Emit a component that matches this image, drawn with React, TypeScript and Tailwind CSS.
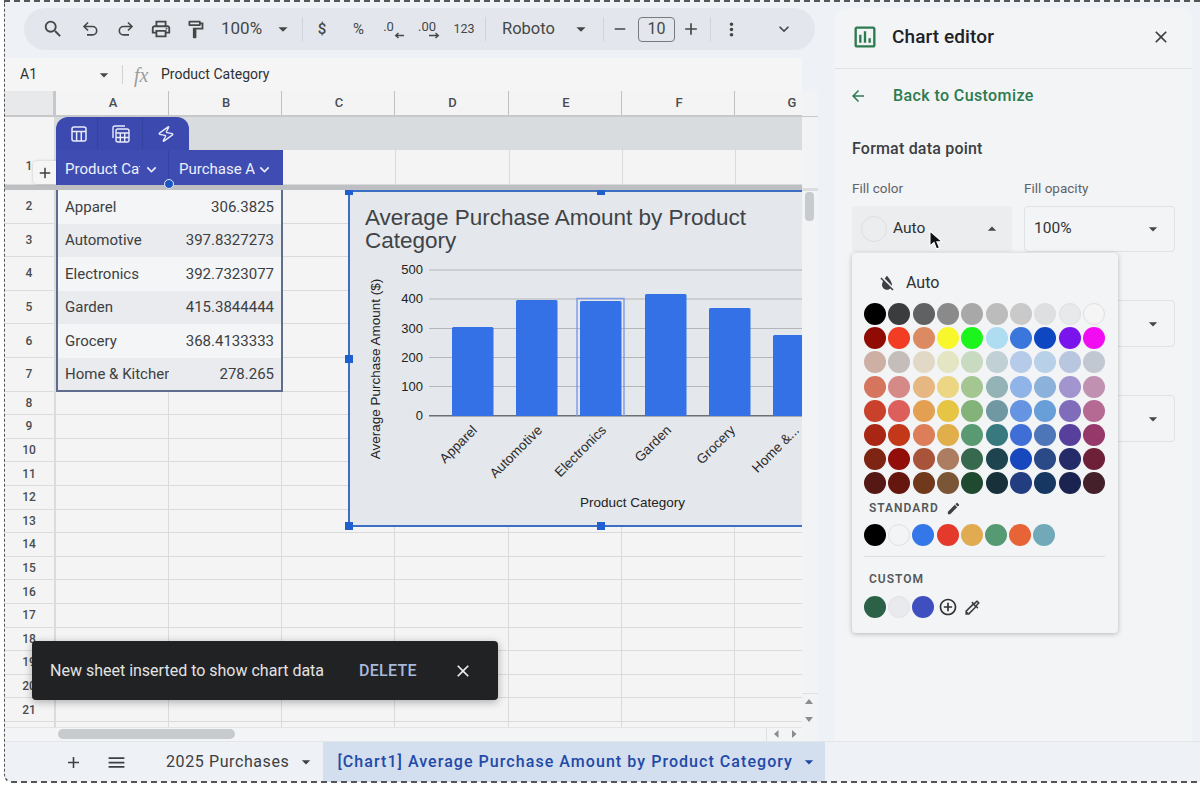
import { Zap } from "lucide-react";
import {
  MdAdd,
  MdAddCircleOutline,
  MdArrowBack,
  MdArrowDropDown,
  MdArrowDropUp,
  MdClose,
  MdEdit,
  MdExpandMore,
  MdFormatColorReset,
  MdMenu,
  MdMoreVert,
  MdOutlineColorize,
  MdOutlineFormatPaint,
  MdOutlineInsertChart,
  MdOutlinePrint,
  MdRemove,
  MdSearch,
} from "react-icons/md";

const palette = [
  "bg-[#000000]", "bg-[#3b3c3e]", "bg-[#606162]", "bg-[#8a8a8a]", "bg-[#a8a8a8]", "bg-[#bcbcbc]", "bg-[#c9c9c9]", "bg-[#dedfe0]", "bg-[#e8e9ea] border border-[#dfe0e2]", "bg-[#f5f5f6] border border-[#dfe0e2]",
  "bg-[#8f0b04]", "bg-[#f23c24]", "bg-[#dc8a62]", "bg-[#f7f72c]", "bg-[#1cf51c]", "bg-[#aeddf2]", "bg-[#3b76dc]", "bg-[#0f46c2]", "bg-[#7a14ec]", "bg-[#f20cf2]",
  "bg-[#cdafa4]", "bg-[#c4bdb9]", "bg-[#e2d8c6]", "bg-[#e3e5c3]", "bg-[#c8dac0]", "bg-[#c0d0d4]", "bg-[#b6cbea]", "bg-[#b8d0e8]", "bg-[#b8c6e0]", "bg-[#c2c8d2]",
  "bg-[#d6755e]", "bg-[#d68a88]", "bg-[#e6b780]", "bg-[#ecd683]", "bg-[#a4c690]", "bg-[#93b3b6]", "bg-[#91b4e8]", "bg-[#8cb2dc]", "bg-[#a194cf]", "bg-[#c091b0]",
  "bg-[#c9412a]", "bg-[#dd5f5c]", "bg-[#e3a052]", "bg-[#e6c544]", "bg-[#84b37a]", "bg-[#6f98a2]", "bg-[#6494e2]", "bg-[#699fd8]", "bg-[#7f6dbb]", "bg-[#b56a94]",
  "bg-[#a92614]", "bg-[#c4381a]", "bg-[#dc7e58]", "bg-[#e1ae4c]", "bg-[#5a9a72]", "bg-[#37797e]", "bg-[#3f6fd6]", "bg-[#4d76b9]", "bg-[#57409c]", "bg-[#96386a]",
  "bg-[#7d2413]", "bg-[#910e0a]", "bg-[#a9543a]", "bg-[#ad7d62]", "bg-[#37694f]", "bg-[#1e4450]", "bg-[#1848bd]", "bg-[#294a86]", "bg-[#252a68]", "bg-[#6e2039]",
  "bg-[#561814]", "bg-[#65170f]", "bg-[#70391c]", "bg-[#7a5636]", "bg-[#204a30]", "bg-[#18303a]", "bg-[#233e80]", "bg-[#173763]", "bg-[#1b2350]", "bg-[#43202a]",
];

const standard = [
  "bg-[#000000]",
  "bg-[#f3f4f5] border border-[#dfe0e2]",
  "bg-[#3477e8]",
  "bg-[#e33a2c]",
  "bg-[#e1ab52]",
  "bg-[#559a72]",
  "bg-[#e76436]",
  "bg-[#71a9b8]",
];

const custom = ["bg-[#2b6147]", "bg-[#e8eaed] border border-[#e0e2e5]", "bg-[#3f4fc0]"];

const tableRows = [
  ["Apparel", "306.3825"],
  ["Automotive", "397.8327273"],
  ["Electronics", "392.7323077"],
  ["Garden", "415.3844444"],
  ["Grocery", "368.4133333"],
  ["Home & Kitchen", "278.265"],
];

const emptyRows = [8, 9, 10, 11, 12, 13, 14, 15, 16, 17, 18, 19, 20, 21];

const bars = [
  { name: "Apparel", x: 452, top: 327, labelX: 478 },
  { name: "Automotive", x: 516, top: 300, labelX: 543 },
  { name: "Electronics", x: 580, top: 301, labelX: 607 },
  { name: "Garden", x: 645, top: 294, labelX: 672 },
  { name: "Grocery", x: 709, top: 308, labelX: 736 },
  { name: "Home &...", x: 773, top: 335, labelX: 800 },
];

const ticks = [
  { label: "500", y: 270 },
  { label: "400", y: 299 },
  { label: "300", y: 328.5 },
  { label: "200", y: 357.5 },
  { label: "100", y: 386.5 },
];

function Sep({ className }: { className: string }) {
  return <div className={`h-[24px] w-px bg-[#d0d4d9] ${className}`} />;
}

function Slot({ className, children }: { className: string; children: React.ReactNode }) {
  return <div className={`flex h-full items-center justify-center ${className}`}>{children}</div>;
}

function UndoIcon({ className = "" }: { className?: string }) {
  return (
    <svg width="18" height="18" viewBox="0 0 18 18" fill="none" stroke="currentColor" strokeWidth="1.6" className={className}>
      <path d="M7 2.5L3 6.5l4 4M3 6.5h8.5a4.2 4.2 0 0 1 0 8.4H6" />
    </svg>
  );
}

function DecimalIcon({ label, flip }: { label: string; flip?: boolean }) {
  return (
    <div className="flex flex-col items-center text-[13px] leading-[12px] text-[#444746]">
      <span className={flip ? "mt-[2px] -ml-[4px]" : "mt-[2px] -ml-[10px]"}>{label}</span>
      <svg width="26" height="7" viewBox="0 0 26 7" className="-mt-[1px]">
        {flip ? (
          <path d="M13 3.5h9M19.5 1l2.8 2.5L19.5 6" fill="none" stroke="#444746" strokeWidth="1.4" />
        ) : (
          <path d="M23 3.5h-8M17.5 1l-2.8 2.5L17.5 6" fill="none" stroke="#444746" strokeWidth="1.4" />
        )}
      </svg>
    </div>
  );
}

function Toolbar() {
  return (
    <div className="ml-[20px] mt-[8px] flex h-[42px] w-[791px] items-center rounded-[21px] bg-[#e3e7ed] pl-[11px] text-[#444746]">
      <Slot className="w-[36px]"><MdSearch size={22} /></Slot>
      <Slot className="w-[37px]"><UndoIcon /></Slot>
      <Slot className="w-[35px]"><UndoIcon className="-scale-x-100" /></Slot>
      <Slot className="w-[35px]"><MdOutlinePrint size={22} /></Slot>
      <Slot className="w-[35px]"><MdOutlineFormatPaint size={21} /></Slot>
      <span className="ml-[8px] w-[50px] text-[17px]">100%</span>
      <Slot className="w-[24px]"><MdArrowDropDown size={22} /></Slot>
      <Sep className="ml-[7px]" />
      <Slot className="w-[38px] text-[15px] font-medium">$</Slot>
      <Slot className="w-[35px] text-[15px]">%</Slot>
      <Slot className="w-[35px]"><DecimalIcon label=".0" /></Slot>
      <Slot className="w-[36px]"><DecimalIcon label=".00" flip /></Slot>
      <Slot className="w-[34px] text-[12.5px]">123</Slot>
      <Sep className="ml-[4px]" />
      <span className="ml-[16px] w-[64px] text-[16.5px]">Roboto</span>
      <Slot className="w-[30px]"><MdArrowDropDown size={22} /></Slot>
      <Sep className="ml-[7px]" />
      <Slot className="w-[32px]"><MdRemove size={18} /></Slot>
      <div className="ml-[2px] flex h-[25px] w-[37px] items-center justify-center rounded-[4px] border border-[#777b80] text-[16px]">10</div>
      <Slot className="w-[32px]"><MdAdd size={20} /></Slot>
      <Sep className="ml-[3px]" />
      <Slot className="w-[40px]"><MdMoreVert size={21} /></Slot>
      <Slot className="ml-[16px] w-[34px]"><MdExpandMore size={20} /></Slot>
    </div>
  );
}

function FormulaBar() {
  return (
    <div className="mt-[8px] flex h-[33px] w-[798px] items-center bg-[#f5f5f6] text-[14px] text-[#2f3133]">
      <span className="ml-[16px] w-[74px]">A1</span>
      <MdArrowDropDown size={20} className="text-[#444746]" />
      <div className="ml-[8px] h-[19px] w-px bg-[#d0d2d5]" />
      <span className="ml-[11px] w-[28px] font-['Liberation_Serif',serif] text-[20px] italic text-[#9a9da0]">fx</span>
      <span className="-ml-[1px]">Product Category</span>
    </div>
  );
}

function RowLabel({ children, className = "" }: { children?: React.ReactNode; className?: string }) {
  return (
    <div className={`flex h-full w-[52px] shrink-0 items-center justify-center border-b border-r-2 border-[#dadbdc] bg-[#f4f4f5] text-[12px] font-medium text-[#4a4c4f] ${className}`}>
      {children}
    </div>
  );
}

const colWidths = ["w-[113px]", "w-[113px]", "w-[113px]", "w-[114px]", "w-[113px]", "w-[113px]", "w-[113px]"];

function EmptyCells({ from = 0 }: { from?: number }) {
  return (
    <>
      {colWidths.slice(from).map((w, i) => (
        <div key={i} className={`h-full shrink-0 border-b border-r border-[#d9dadb] ${w}`} />
      ))}
    </>
  );
}

function Sheet() {
  return (
    <div className="relative h-[650px] w-[798px] overflow-hidden bg-[#f4f4f5]">
      {/* column letters */}
      <div className="flex h-[26px] border-b-2 border-[#c6c8ca]">
        <div className="h-full w-[52px] shrink-0 border-r-[3px] border-[#c6c8ca] bg-[#e8e9eb]" />
        {"ABCDEFG".split("").map((c, i) => (
          <div key={c} className={`flex h-full shrink-0 items-center justify-center border-r border-[#bfc1c3] pl-[2px] text-[13px] font-medium text-[#4a4c4f] ${colWidths[i]}`}>
            {c}
          </div>
        ))}
      </div>

      {/* table toolbar band */}
      <div className="flex h-[33px]">
        <RowLabel className="border-b-0" />
        <div className="h-full flex-1 bg-[#d9dcde]">
          <div className="flex h-full w-[133px] items-center rounded-t-[12px] bg-[#3c4ab0] text-[#e8ebfa]">
            <div className="flex h-full w-[42px] items-center justify-center border-r border-[#3443a0] pl-[5px]">
              <svg width="18" height="18" viewBox="0 0 18 18" fill="none" stroke="currentColor" strokeWidth="1.5">
                <rect x="2" y="2" width="14" height="14" rx="2" />
                <path d="M2 6.5h14M6.6 6.5V16M11.3 6.5V16" />
              </svg>
            </div>
            <div className="flex h-full w-[45px] items-center justify-center border-r border-[#3443a0] pl-[1px]">
              <svg width="20" height="20" viewBox="0 0 20 20" fill="none" stroke="currentColor" strokeWidth="1.4">
                <path d="M2 14V4a2 2 0 0 1 2-2h10" />
                <rect x="5" y="5" width="13" height="13" rx="2" />
                <path d="M5 9h13M5 13.5h13M9.3 9v9M13.7 9v9" />
              </svg>
            </div>
            <div className="flex h-full w-[46px] items-center justify-center">
              <Zap size={18} strokeWidth={1.8} className="rotate-[10deg]" />
            </div>
          </div>
        </div>
      </div>

      {/* row 1 */}
      <div className="flex h-[35px]">
        <RowLabel className="items-start pt-[7px]">1</RowLabel>
        <div className="flex h-full w-[113px] shrink-0 items-center justify-between border-r border-[#3443a0] bg-[#3f4db3] pl-[9px] pr-[7px] pt-[3px] text-[15px] text-[#eef0fb]">
          <span className="w-[75px] overflow-hidden whitespace-nowrap">Product Category</span>
          <MdExpandMore size={19} />
        </div>
        <div className="flex h-full w-[114px] shrink-0 items-center justify-between bg-[#3f4db3] pl-[10px] pr-[9px] pt-[3px] text-[15px] text-[#eef0fb]">
          <span className="w-[76px] overflow-hidden whitespace-nowrap">Purchase Amount</span>
          <MdExpandMore size={19} />
        </div>
        <EmptyCells from={2} />
      </div>

      {/* frozen divider */}
      <div className="h-[5px] bg-[#bdbfc2]" />

      {/* table rows */}
      {tableRows.map(([name, value], i) => (
        <div key={name} className="flex h-[33.6px]">
          <RowLabel>{i + 2}</RowLabel>
          <div className={`relative -mr-[1px] flex h-full w-[227px] shrink-0 items-center border-x-2 border-[#5f6c8c] text-[15px] text-[#3c4043] ${i === 5 ? "border-b-2" : ""} ${i % 2 === 1 ? "bg-[#e9ebee]" : "bg-[#f4f5f6]"}`}>
            <span className="w-[111px] shrink-0 overflow-hidden whitespace-nowrap pl-[7px]">{name}</span>
            <span className="flex-1 pr-[7px] text-right">{value}</span>
          </div>
          <EmptyCells from={2} />
        </div>
      ))}

      {emptyRows.map((n) => (
        <div key={n} className="flex h-[23.6px]">
          <RowLabel>{n}</RowLabel>
          <EmptyCells />
        </div>
      ))}

      {/* stub of row 22 */}
      <div className="flex h-[5px]">
        <div className="h-full w-[52px] shrink-0 border-r-2 border-[#dadbdc]" />
        {colWidths.map((w, i) => (
          <div key={i} className={`h-full shrink-0 border-r border-[#d9dadb] ${w}`} />
        ))}
      </div>

      {/* horizontal scrollbar */}
      <div className="flex h-[14px] items-center border-t border-[#e3e4e6] bg-[#f3f4f6] pl-[54px]">
        <div className="h-[10px] w-[177px] rounded-[5px] bg-[#c8cbce]" />
        <span className="ml-[531px] flex h-full w-[20px] items-center justify-center border-l border-[#dfe0e2]">
          <svg width="5" height="8" viewBox="0 0 5 8"><path d="M4.5 0v8L0 4z" fill="#8a8d90" /></svg>
        </span>
        <span className="flex h-full w-[16px] items-center justify-center">
          <svg width="5" height="8" viewBox="0 0 5 8"><path d="M0 0v8l4.5-4z" fill="#8a8d90" /></svg>
        </span>
      </div>

      <Chart />

      {/* add column button and resize dot */}
      <div className="absolute left-[29px] top-[70px] flex h-[23px] w-[23px] items-center justify-center rounded-l-[4px] bg-[#f5f5f6] shadow-[0_0_3px_rgba(0,0,0,0.2)]">
        <MdAdd size={18} className="text-[#3c4043]" />
      </div>
      <div className="absolute left-[160px] top-[88px] h-[10px] w-[10px] rounded-full border border-[#e6e8f5] bg-[#1a56c4]" />

      {/* toast */}
      <div className="absolute left-[28px] top-[550px] flex h-[59px] w-[466px] items-center rounded-[4px] bg-[#212223] pl-[18px] text-[16px] text-[#e3e3e3] shadow-[0_2px_8px_rgba(0,0,0,0.3)]">
        <span className="w-[309px] whitespace-nowrap">New sheet inserted to show chart data</span>
        <span className="w-[94px] font-medium tracking-[0.3px] text-[#a8b9dd]">DELETE</span>
        <MdClose size={20} className="text-[#ededed]" />
      </div>
    </div>
  );
}

function Chart() {
  return (
    <div className="absolute left-[344px] top-[99px] h-[337px] w-[454px] border-y-2 border-l-2 border-[#3a6fc4] bg-[#e4e7eb]">
      <svg viewBox="350 192 452 333" className="h-[333px] w-[452px] font-['Liberation_Sans',sans-serif]">
        <text x="365" y="225" fontSize="22.5" fill="#3f4347">Average Purchase Amount by Product</text>
        <text x="365" y="248" fontSize="22.5" fill="#3f4347">Category</text>

        {ticks.map((t) => (
          <g key={t.label}>
            <line x1="429" x2="802" y1={t.y} y2={t.y} stroke="#b4b6ba" strokeWidth="1.2" />
            <text x="423" y={t.y + 4} fontSize="13" textAnchor="end" fill="#222">{t.label}</text>
          </g>
        ))}
        <line x1="429" x2="802" y1="415.7" y2="415.7" stroke="#6d6f72" strokeWidth="1.4" />
        <text x="423" y="420" fontSize="13" textAnchor="end" fill="#222">0</text>

        {bars.map((b) => (
          <g key={b.name}>
            <rect x={b.x} y={b.top} width="41.5" height={416 - b.top} rx="1.5" fill="#3571e6" />
            <text x={b.labelX} y="431" fontSize="13.5" textAnchor="end" fill="#2a2a2a" transform={`rotate(-45 ${b.labelX} 431)`}>
              {b.name}
            </text>
          </g>
        ))}
        <path d="M577 416V298.5h47V416" fill="none" stroke="#7b9be6" strokeWidth="1.4" />

        <text x="376" y="369" fontSize="13.5" textAnchor="middle" fill="#222" transform="rotate(-90 376 369) translate(0 4)">
          Average Purchase Amount ($)
        </text>
        <text x="632.5" y="507" fontSize="13.5" textAnchor="middle" fill="#222">Product Category</text>
      </svg>

      {/* resize handles */}
      <div className="absolute -left-[5px] -top-[2px] h-[5px] w-[8px] bg-[#1f5fd0]" />
      <div className="absolute left-[247px] -top-[2px] h-[5px] w-[8px] bg-[#1f5fd0]" />
      <div className="absolute -left-[5px] top-[163px] h-[8px] w-[8px] bg-[#1f5fd0]" />
      <div className="absolute -bottom-[5px] -left-[5px] h-[8px] w-[8px] bg-[#1f5fd0]" />
      <div className="absolute -bottom-[5px] left-[247px] h-[8px] w-[8px] bg-[#1f5fd0]" />
    </div>
  );
}

function VerticalScroll() {
  return (
    <div className="relative flex h-[650px] w-[16px] flex-col bg-[#f2f3f5]">
      <div className="h-[26px] border-b border-[#c6c8ca]" />
      <div className="mt-[71px] h-[3px] bg-[#dcdde0]" />
      <div className="ml-[3px] mt-[1px] h-[29px] w-[9px] rounded-[4px] bg-[#c8cbce]" />
      <div className="mb-[19px] mt-auto flex flex-col items-center gap-[13px] border-t border-[#dfe0e2] pr-[2px] pt-[5px]">
        <svg width="8" height="5" viewBox="0 0 8 5"><path d="M0 5h8L4 0z" fill="#8a8d90" /></svg>
        <svg width="8" height="5" viewBox="0 0 8 5"><path d="M0 0h8L4 5z" fill="#8a8d90" /></svg>
      </div>
    </div>
  );
}

function PickerDots({ items }: { items: string[] }) {
  return (
    <>
      {items.map((c, i) => (
        <div key={i} className={`h-[22px] w-[22px] rounded-full ${c}`} />
      ))}
    </>
  );
}

function ColorPopup() {
  return (
    <div className="absolute left-[17px] top-[245px] h-[380px] w-[266px] rounded-[4px] bg-[#f3f4f6] pl-[12px] shadow-[0_1px_5px_rgba(0,0,0,0.25)]">
      <div className="flex h-[50px] items-center pl-[13px] pt-[10px] text-[16px] text-[#2f3133]">
        <MdFormatColorReset size={20} className="text-[#3c4043]" />
        <span className="ml-[9px]">Auto</span>
      </div>
      <div className="grid w-[241px] grid-cols-10 gap-[2.2px]">
        <PickerDots items={palette} />
      </div>
      <div className="ml-[5px] mt-[7px] flex h-[14px] items-center text-[12px] font-semibold tracking-[1px] text-[#55585b]">
        STANDARD
        <MdEdit size={15} className="ml-[7px] text-[#3c4043]" />
      </div>
      <div className="mt-[9px] flex gap-[2.2px]">
        <PickerDots items={standard} />
      </div>
      <div className="mr-[13px] mt-[10px] h-px bg-[#dcdee1]" />
      <div className="ml-[5px] mt-[15px] text-[12px] font-semibold leading-[14px] tracking-[1px] text-[#55585b]">CUSTOM</div>
      <div className="mt-[10px] flex items-center gap-[2.2px]">
        <PickerDots items={custom} />
        <MdAddCircleOutline size={20} className="ml-[1px] text-[#2f3133]" />
        <MdOutlineColorize size={19} className="ml-[3px] text-[#3c4043]" />
      </div>
    </div>
  );
}

function ChartEditor() {
  return (
    <div className="relative mt-[8px] h-[733px] w-[357px] rounded-t-[14px] bg-[#f3f4f6]">
      <div className="flex h-[61px] items-center border-b border-[#dfe1e4] pb-[2px] pl-[16px] pr-[21px]">
        <MdOutlineInsertChart size={28} className="text-[#2c7a4f]" />
        <span className="ml-[13px] text-[19px] font-medium tracking-[0.1px] text-[#202124]">Chart editor</span>
        <MdClose size={20} className="ml-auto text-[#3c4043]" />
      </div>
      <div className="mt-[15px] flex h-[24px] items-center pl-[14px] text-[16px] font-medium tracking-[0.4px] text-[#2c7a4f]">
        <MdArrowBack size={18} />
        <span className="ml-[26px]">Back to Customize</span>
      </div>
      <div className="ml-[17px] mt-[29px] text-[16px] font-medium leading-[24px] tracking-[0.2px] text-[#3c4043]">Format data point</div>
      <div className="ml-[17px] mt-[19px] flex gap-[12px] text-[13.5px] leading-[16px] text-[#5f6368]">
        <span className="w-[160px]">Fill color</span>
        <span>Fill opacity</span>
      </div>
      <div className="ml-[17px] mt-[10px] flex gap-[12px] text-[15.5px] text-[#2f3133]">
        <div className="flex h-[46px] w-[160px] items-center rounded-[4px] bg-[#ebedef] pl-[9px]">
          <div className="h-[26px] w-[26px] rounded-full border border-[#dcdee1]" />
          <span className="ml-[6px] w-[89px]">Auto</span>
          <MdArrowDropUp size={20} className="text-[#444746]" />
        </div>
        <div className="flex h-[46px] w-[151px] items-center justify-between rounded-[4px] border border-[#dfe1e4] pl-[9px] pr-[11px]">
          <span>100%</span>
          <MdArrowDropDown size={20} className="text-[#444746]" />
        </div>
      </div>
      <div className="ml-[17px] mt-[48px] flex h-[47px] w-[323px] items-center justify-end rounded-[4px] border border-[#dfe1e4] pr-[11px]">
        <MdArrowDropDown size={20} className="text-[#444746]" />
      </div>
      <div className="ml-[17px] mt-[48px] flex h-[47px] w-[323px] items-center justify-end rounded-[4px] border border-[#dfe1e4] pr-[11px]">
        <MdArrowDropDown size={20} className="text-[#444746]" />
      </div>

      <ColorPopup />

      {/* mouse pointer */}
      <svg width="16" height="22" viewBox="0 0 16 22" className="absolute left-[93px] top-[222px]">
        <path d="M2 1v15l4-3.5L8.5 19l3-1.3-2.6-6H14z" fill="#111" stroke="#fff" strokeWidth="1.1" />
      </svg>
    </div>
  );
}

function TabBar() {
  return (
    <div className="flex h-[41px] items-center border-t border-[#e3e5e9] bg-[#eef1f5] text-[16px] tracking-[0.6px] text-[#3c4043]">
      <MdAdd size={19} className="ml-[60px]" />
      <MdMenu size={21} className="ml-[23px]" />
      <span className="ml-[39px] whitespace-nowrap">2025 Purchases</span>
      <MdArrowDropDown size={20} className="ml-[7px]" />
      <div className="ml-[7px] flex h-full w-[502px] items-center bg-[#d3deee] pl-[14px] font-medium tracking-[1.05px] text-[#1f4aa8]">
        <span className="whitespace-nowrap">[Chart1] Average Purchase Amount by Product Category</span>
        <MdArrowDropDown size={20} className="ml-[6px]" />
      </div>
    </div>
  );
}

export default function App() {
  return (
    <div className="relative h-[785px] w-[1200px] overflow-hidden bg-white pl-[4px] font-['Roboto',sans-serif]">
      <div className="flex h-[782px] flex-col overflow-hidden rounded-bl-[8px] bg-[#eef1f5]">
        <div className="flex h-[741px]">
          <div className="w-[831px] shrink-0">
            <Toolbar />
            <FormulaBar />
            <div className="flex">
              <Sheet />
              <VerticalScroll />
            </div>
          </div>
          <ChartEditor />
        </div>
        <TabBar />
      </div>
      {/* marching ants of the screen grab */}
      <div className="pointer-events-none absolute bottom-[2px] left-[4px] right-0 top-0 rounded-bl-[8px] border-y-2 border-l border-dashed border-[#555555]" />
    </div>
  );
}
